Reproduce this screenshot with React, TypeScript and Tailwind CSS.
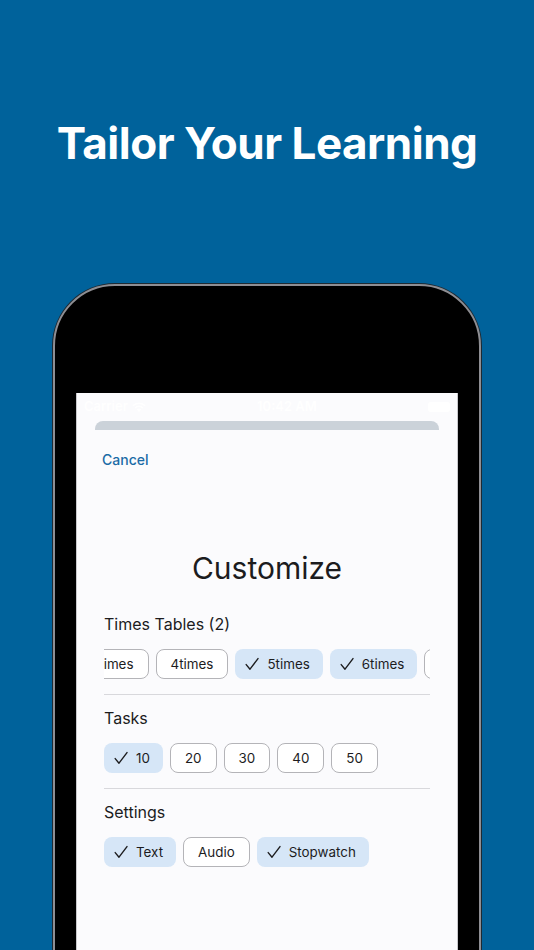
import React from "react";

const font = { fontFamily: "Inter, 'Noto Sans', sans-serif" };

const Check = () => (
  <svg width="16" height="16" viewBox="0 0 16 16" fill="none" className="shrink-0">
    <path
      d="M2.2 8.6 6 13.2 14 2.6"
      stroke="#1c1c1e"
      strokeWidth="1.4"
      strokeLinecap="round"
      strokeLinejoin="round"
    />
  </svg>
);

const Chip: React.FC<{ label: string; selected?: boolean; className?: string }> = ({
  label,
  selected,
  className = "",
}) =>
  selected ? (
    <div
      className={`h-[30px] shrink-0 flex items-center gap-[7px] pl-[9px] pr-[13px] rounded-[8px] bg-[#d6e6f7] text-[13.4px] text-[#1c1c1e] ${className}`}
    >
      <Check />
      <span>{label}</span>
    </div>
  ) : (
    <div
      className={`h-[30px] shrink-0 flex items-center px-[14px] rounded-[8px] border border-[#b4b4b8] bg-white text-[13.4px] text-[#1c1c1e] ${className}`}
    >
      {label}
    </div>
  );

const Section: React.FC<{ title: string; children: React.ReactNode; divider?: boolean }> = ({
  title,
  children,
  divider,
}) => (
  <div>
    <div className="h-[20px] leading-[20px] text-[16px] text-[#1c1c1e]">{title}</div>
    <div className="mt-[15px] overflow-hidden">
      <div className="flex gap-[7px]">{children}</div>
    </div>
    {divider && <div className="mt-[15px] mb-[13px] h-px bg-[#d8d8dc]" />}
  </div>
);

export default function App() {
  return (
    <div
      className="w-[534px] h-[950px] bg-[#00629b] overflow-hidden flex flex-col items-center"
      style={font}
    >
      <h1 className="mt-[117px] h-[52px] leading-[52px] text-[44px] font-bold text-white tracking-[-0.5px]">
        Tailor Your Learning
      </h1>

      <div className="mt-[115px] w-[428px] h-[700px] shrink-0 rounded-t-[62px] bg-black border-2 border-[#8e8e93] ring-1 ring-[#1e2a33] pt-[107px] px-[21px]">
        <div className="h-full bg-[#fbfbfd] border-l border-r border-[#c8c8cc]">
          {/* status bar */}
          <div className="h-[28px] flex items-center justify-between px-[7px] text-[13px] font-semibold text-white">
            <div className="flex items-center gap-1">
              <span>Carrier</span>
              <svg width="14" height="10" viewBox="0 0 14 10" fill="white">
                <path d="M7 10 4.8 7.6a3 3 0 0 1 4.4 0Z" />
                <path d="M2.6 5.4a6.2 6.2 0 0 1 8.8 0l-1.1 1.1a4.6 4.6 0 0 0-6.6 0Z" />
                <path d="M.4 3.2a9.3 9.3 0 0 1 13.2 0l-1.1 1.1a7.7 7.7 0 0 0-11 0Z" />
              </svg>
            </div>
            <span>10:42 AM</span>
            <div className="w-[22px] h-[10px] rounded-[3px] bg-white" />
          </div>

          {/* sheet grabber */}
          <div className="mx-[18px] h-[9px] rounded-t-[8px] bg-[#cbd2d9]" />

          <div className="mt-[20px] px-[25px] h-[20px] leading-[20px] text-[14px] font-medium text-[#1b6ba6]">
            Cancel
          </div>

          <div className="mt-[80px] h-[36px] leading-[36px] text-center text-[30px] text-[#1c1c1e]">
            Customize
          </div>

          <div className="mt-[28px] px-[27px]">
            <Section title="Times Tables (2)" divider>
              <Chip label="3times" className="-ml-[28px]" />
              <Chip label="4times" />
              <Chip label="5times" selected />
              <Chip label="6times" selected />
              <Chip label="7times" />
            </Section>
            <Section title="Tasks" divider>
              <Chip label="10" selected />
              <Chip label="20" />
              <Chip label="30" />
              <Chip label="40" />
              <Chip label="50" />
            </Section>
            <Section title="Settings">
              <Chip label="Text" selected />
              <Chip label="Audio" />
              <Chip label="Stopwatch" selected />
            </Section>
          </div>
        </div>
      </div>
    </div>
  );
}
